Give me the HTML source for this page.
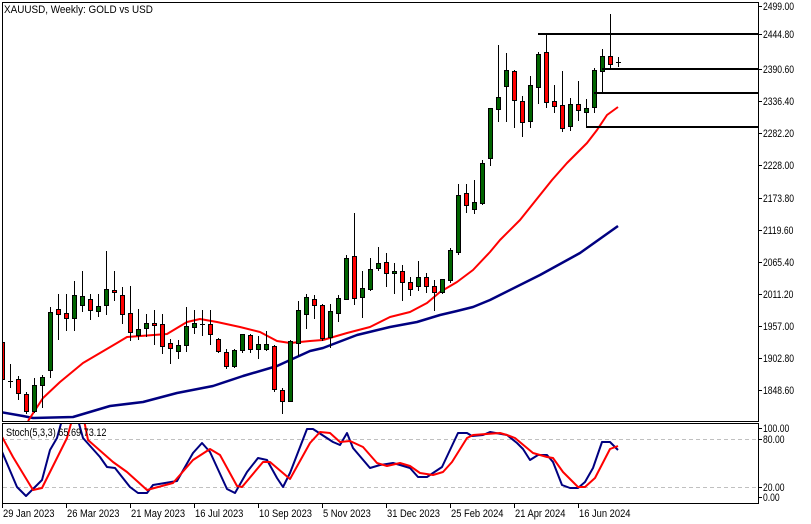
<!DOCTYPE html><html><head><meta charset="utf-8"><style>
body{margin:0;background:#fff;width:811px;height:524px;overflow:hidden}
svg{display:block}
text{font-family:"Liberation Sans",sans-serif;font-size:11px;fill:#000}
</style></head><body>
<svg id="s" width="811" height="524" xmlns="http://www.w3.org/2000/svg">
<defs><clipPath id="cm"><rect x="3" y="3" width="755" height="418"/></clipPath>
<clipPath id="cs"><rect x="3" y="424" width="755" height="79"/></clipPath></defs>
<rect x="0" y="0" width="811" height="524" fill="#fff"/>
<g id="main" clip-path="url(#cm)"></g>
<g id="st" clip-path="url(#cs)">
<line x1="3" y1="439.5" x2="758" y2="439.5" stroke="#c0c0c0" stroke-dasharray="4,3"/>
<line x1="3" y1="487.5" x2="758" y2="487.5" stroke="#c0c0c0" stroke-dasharray="4,3"/>
</g>
<g fill="none" stroke="#000">
<path d="M2.5 2.5H758.5V421.5H2.5Z"/>
<path d="M2.5 423.5H758.5V503.5H2.5Z"/>
</g>
<text id="t1" x="4" y="13">XAUUSD, Weekly:  GOLD vs USD</text>
<text id="t2" x="6" y="436">Stoch(5,3,3) 65.69 73.12</text>
<g id="ax"></g>
</svg>
<script>
var NS="http://www.w3.org/2000/svg";
function el(p,t,a){var e=document.createElementNS(NS,t);for(var k in a)e.setAttribute(k,a[k]);p.appendChild(e);return e;}
function sq(t,f){try{var w=t.getComputedTextLength();t.setAttribute('textLength',(w*f).toFixed(1));t.setAttribute('lengthAdjust','spacingAndGlyphs');}catch(e){}}
var M=document.getElementById('main'),S=document.getElementById('st'),A=document.getElementById('ax');
var C=[
['r',342,379,335,390],['d',381,381,364,387],['r',379,393,376,399],['r',394,411,392,413],['g',385,411,378,412],
['g',377,385,375,407],['g',312,370,307,377],['r',309,314,294,339],['r',313,318,294,330],['g',295,318,281,330],
['g',296,305,271,311],['r',299,310,294,319],['g',306,311,294,316],['g',289,305,251,314],['r',290,292,271,300],
['r',295,314,287,323],['r',313,332,286,340],['g',329,335,309,339],['g',323,328,314,336],['r',323,325,310,344],
['r',324,346,314,353],['r',343,348,339,363],['g',345,351,340,358],['g',326,345,307,351],['g',323,327,310,333],
['d',324,324,310,335],['r',324,334,310,344],['r',339,351,338,352],['r',352,366,349,368],['g',350,366,349,367],
['g',334,350,334,352],['r',335,349,334,352],['g',344,349,336,358],['g',344,349,331,350],['r',346,389,345,391],
['r',390,401,388,413],['g',341,401,340,401],['g',310,343,301,355],['g',297,314,294,328],['r',299,305,295,318],
['r',305,338,304,340],['g',311,337,304,347],['g',298,313,295,321],['g',258,299,255,299],['r',256,298,213,304],
['g',288,297,271,317],['g',269,289,258,290],['g',263,268,247,270],['r',262,273,253,286],['g',271,273,263,293],
['r',271,282,265,300],['r',282,289,277,295],['g',277,286,261,290],['r',277,286,273,292],['r',286,292,280,310],
['g',279,292,279,293],['g',250,280,248,282],['g',195,252,184,254],['r',193,205,184,212],['g',202,209,180,213],
['g',163,203,160,204],['g',108,158,108,165],['g',97,109,45,121],['g',70,86,53,121],['r',71,100,70,127],
['r',101,122,96,136],['g',85,121,76,127],['g',54,87,52,103],['r',52,102,34,107],['r',101,106,85,112],
['r',105,128,71,131],['g',104,126,98,130],['r',104,110,81,120],['g',108,112,99,117],['g',70,107,68,112],
['g',56,71,49,92],['r',56,64,14,68],['d',62,62,57,66]];
function pl(p,pts,col,w){el(p,'polyline',{points:pts,fill:'none',stroke:col,'stroke-width':w,'stroke-linejoin':'round'});}
pl(M,"0,412 23,416 33,418 73,417 110,406 143,402 177,393 213,386 243,376 277,366 310,351 323,348 357,335 390,327 417,322 440,315 457,311 473,307 490,300 500,295 540,275 580,253 618,226","#000080",2.5);
pl(M,"28,421 43,398 60,382 83,363 100,353 117,343 127,337 167,334 187,322 200,319 217,322 240,327 260,332 277,341 290,343 310,341 323,340 347,333 370,327 390,317 410,312 427,303 440,292 457,282 473,270 490,252 500,240 520,220 552,180 567,163 587,143 597,130 607,115 618,107","#ff0000",2);
C.forEach(function(c,i){var x=2+8*i;
el(M,'line',{x1:x+.5,y1:c[3],x2:x+.5,y2:c[4]+1,stroke:'#000'});
if(c[0]=='d'){el(M,'line',{x1:x-2,y1:c[1]+.5,x2:x+3,y2:c[1]+.5,stroke:'#000'});}
else el(M,'rect',{x:x-1.5,y:c[1]+.5,width:4,height:Math.max(1,c[2]-c[1]),fill:c[0]=='g'?'#006400':'#ff0000',stroke:'#000'});
});
[[538,34],[602,69],[594,93],[586,127]].forEach(function(h){el(M,'line',{x1:h[0],y1:h[1],x2:758,y2:h[1],stroke:'#000','stroke-width':2});});
el(M,'line',{x1:586.5,y1:112,x2:586.5,y2:127,stroke:'#000'});
pl(S,"0,447 17,487 26,496 42,480 50,450 57,438 62,420 78,420 83,438 100,457 107,467 115,468 130,487 138,493 147,493 153,485 177,481 193,453 202,443 210,452 227,489 235,493 247,472 258,458 267,460 277,478 283,487 290,473 307,429 313,429 333,442 340,445 347,433 353,448 370,468 380,465 393,463 400,465 410,468 418,477 427,477 442,467 458,433 467,433 472,436 483,435 490,432 507,435 517,443 523,449 530,460 538,455 547,455 553,462 562,485 570,488 578,488 585,482 593,468 602,442 610,442 618,450","#000080",2);
pl(S,"0,433 13,457 33,490 42,488 67,438 72,420 84,420 88,440 113,462 127,472 147,490 173,483 193,460 210,449 220,455 237,486 242,487 263,462 270,462 290,479 310,443 320,432 330,433 340,442 350,441 363,447 377,463 387,466 400,463 410,466 420,473 433,475 443,472 452,462 467,438 473,435 500,433 507,435 515,438 533,453 547,457 553,458 563,472 578,487 585,487 595,478 610,449 618,446","#ff0000",2);
[["2499.00",6],["2444.80",34],["2390.60",69],["2336.40",101],["2282.20",133],["2228.00",165],["2173.80",198],["2119.60",230],["2065.40",262],["2011.20",294],["1957.00",326],["1902.80",358],["1848.60",390],["100.00",428],["80.00",439],["20.00",487],["0.00",497]].forEach(function(l){
el(A,'line',{x1:758,y1:l[1]+.5,x2:762,y2:l[1]+.5,stroke:'#000'});
var t=el(A,'text',{x:763,y:l[1]+4});t.textContent=l[0];sq(t,0.78);});
[["29 Jan 2023",2],["26 Mar 2023",66],["21 May 2023",130],["16 Jul 2023",194],["10 Sep 2023",258],["5 Nov 2023",322],["31 Dec 2023",386],["25 Feb 2024",450],["21 Apr 2024",514],["16 Jun 2024",578]].forEach(function(l){
el(A,'line',{x1:l[1]+.5,y1:503,x2:l[1]+.5,y2:508,stroke:'#000'});
var t=el(A,'text',{x:l[1]+1,y:517});t.textContent=l[0];sq(t,0.85);});
sq(document.getElementById('t1'),0.9);sq(document.getElementById('t2'),0.83);
</script>
</body></html>
